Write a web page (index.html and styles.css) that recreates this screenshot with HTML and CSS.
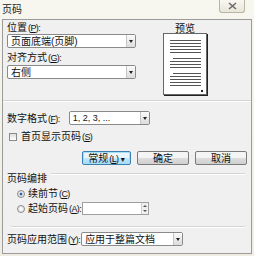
FILE: index.html
```html
<!DOCTYPE html>
<html lang="zh">
<head>
<meta charset="utf-8">
<link rel="stylesheet" href="styles.css">
</head>
<body>
<div class="window">
  <div class="titlebar">
    <span class="title">页码</span>
    <span class="close"><svg width="9" height="8" viewBox="0 0 9 8"><path d="M1 1 L8 7 M8 1 L1 7" stroke="#6b6b6b" stroke-width="1.6" fill="none"/></svg></span>
  </div>
  <div class="client">
    <div class="top">
      <div class="leftcol">
        <div class="label">位置<span class="k">(<u>P</u>):</span></div>
        <div class="select wide s1"><span>页面底端<span class="p">(</span>页脚<span class="p">)</span></span><i class="arrow"></i></div>
        <div class="label l2">对齐方式<span class="k">(<u>G</u>):</span></div>
        <div class="select wide"><span>右侧</span><i class="arrow"></i></div>
      </div>
      <div class="preview">
        <div class="plabel">预览</div>
        <div class="page">
          <div class="lines"><b></b><b></b><b></b><b></b><b></b></div>
          <div class="lines"><b class="short"></b><b></b><b></b><b></b></div>
          <div class="lines"><b class="short"></b><b></b><b></b><b></b><b></b></div>
          <i class="num"></i>
        </div>
      </div>
    </div>
    <div class="sep full"></div>
    <div class="row fmt">
      <span class="label">数字格式<span class="k">(<u>F</u>):</span></span>
      <div class="select fmtsel"><span class="lat">1, 2, 3, ...</span><i class="arrow"></i></div>
    </div>
    <div class="row chk">
      <span class="checkbox"></span><span class="label">首页显示页码<span class="k">(<u>S</u>)</span></span>
    </div>
    <div class="buttons">
      <div class="btn def">常规<span class="k">(<u>L</u>)</span> <span class="tri">▾</span></div>
      <div class="btn">确定</div>
      <div class="btn">取消</div>
    </div>
    <div class="group">
      <span class="label">页码编排</span><span class="gline"></span>
    </div>
    <div class="row radio r1"><span class="radiob on"></span><span class="label">续前节<span class="k">(<u>C</u>)</span></span></div>
    <div class="row radio r2"><span class="radiob"></span><span class="label">起始页码<span class="k">(<u>A</u>):</span></span>
      <div class="spin"><span class="spinbtn"><i class="up"></i><i class="dn"></i></span></div>
    </div>
    <div class="sep inner"></div>
    <div class="row apply">
      <span class="label">页码应用范围<span class="k">(<u>Y</u>):</span></span>
      <div class="select applysel"><span>应用于整篇文档</span><i class="arrow"></i></div>
    </div>
  </div>
</div>
</body>
</html>
```
FILE: styles.css
```css
* { box-sizing: border-box; }
html, body { margin: 0; padding: 0; }
body {
  width: 254px; height: 256px; overflow: hidden;
  font-family: "Noto Sans CJK SC", "Liberation Sans", sans-serif;
  font-size: 10px; color: #111;
  background: #f4f3ec;
}
u { text-decoration: underline; }
.k { font-family: "Liberation Sans", sans-serif; font-size: 9px; letter-spacing: -0.6px; margin-left: 1px; }
.p { font-family: "Liberation Sans", sans-serif; font-size: 10px; }
.lat { font-family: "Liberation Sans", sans-serif; font-size: 9px; }
.window {
  width: 254px; height: 256px;
  background: linear-gradient(#f7f6ef, #efede2);
  padding: 0 2px 2px 2px;
  display: flex; flex-direction: column;
}
.titlebar {
  height: 19px; display: flex; justify-content: space-between; align-items: flex-start;
}
.title { font-size: 10px; line-height: 12px; padding: 3px 0 0 0; color: #222; }
.close {
  width: 26px; height: 13px; margin-right: 7px;
  border: 1px solid #b9b6a6; border-top: none; border-radius: 0 0 3px 3px;
  background: linear-gradient(#f8f7f2, #e9e6d9);
  display: flex; align-items: center; justify-content: center;
}
.client {
  flex: 1;
  background: #f0f0f0;
  border: 1px solid #9b9b9b;
  padding: 1px 0 0 4px;
}
.top { display: flex; }
.leftcol { width: 130px; flex: none; }
.label { line-height: 12px; white-space: nowrap; }
.leftcol .label { line-height: 11px; }
.l2 { margin-top: 3px; }
.select {
  height: 14px; border: 1px solid #8a8a8a; border-radius: 2px; background: #fff;
  display: flex; align-items: center; justify-content: space-between;
  padding-left: 3px; line-height: 12px; margin-top: 1px; white-space: nowrap;
}
.select.s1 { margin-top: 0; }
.select.wide { width: 129px; }
.arrow {
  width: 9px; height: 12px; display: block; flex: none;
  background: linear-gradient(#fbfbfb, #dcdcdc);
  border-left: 1px solid #c4c4c4; position: relative;
}
.arrow::after {
  content: ""; position: absolute; left: 2px; top: 5px;
  border-left: 2.5px solid transparent; border-right: 2.5px solid transparent; border-top: 3px solid #222;
}
.preview { margin-left: 25px; width: 46px; flex: none; display: flex; flex-direction: column; align-items: center; }
.plabel { line-height: 11px; margin-top: 1px; }
.page {
  width: 44px; height: 62px; background: #fff;
  border: 1px solid #666; box-shadow: 1px 1px 0 #222;
  padding: 6px 5px 0 6px; position: relative;
}
.lines { margin-bottom: 5px; }
.lines b { display: block; height: 1px; background: #555; margin-bottom: 2px; }
.lines b.short { margin-left: 3px; }
.num { position: absolute; right: 3px; bottom: 2px; width: 2px; height: 2px; background: #222; }
.sep { height: 2px; border-top: 1px solid #d5d5d5; border-bottom: 1px solid #fff; }
.sep.full { margin: 5px 0 0 -4px; }
.row { display: flex; align-items: center; }
.fmt { margin-top: 9px; }
.fmtsel { width: 81px; margin: 0 0 0 9px; }
.chk { margin-top: 5px; }
.checkbox { width: 8px; height: 8px; border: 1px solid #8a8a8a; background: linear-gradient(#dedede, #fff); margin: 0 4px 0 2px; }
.buttons { display: flex; margin: 8px 0 0 75px; gap: 6px; }
.btn {
  width: 52px; height: 14px; border: 1px solid #7a7a7a; border-radius: 2px;
  background: linear-gradient(#f5f5f5 45%, #dcdcdc 55%, #d0d0d0);
  text-align: center; line-height: 12px; white-space: nowrap;
}
.btn.def { width: 49px; border-color: #3c7fb1; box-shadow: inset 0 0 0 1px #a6e0f8; background: linear-gradient(#eaf6fd 45%, #bee6fd 55%, #a7d9f5); }
.tri { font-family: "DejaVu Sans", sans-serif; font-size: 8px; }
.group { display: flex; align-items: flex-start; margin-top: 7px; }
.gline { flex: 1; height: 2px; border-top: 1px solid #d5d5d5; border-bottom: 1px solid #fff; margin: 1px 6px 0 4px; }
.radio { margin-left: 10px; }
.r1 { margin-top: 3px; }
.r2 { margin-top: 2px; }
.radiob {
  width: 8px; height: 8px; border-radius: 50%; border: 1px solid #8a8a8a;
  background: radial-gradient(#fff, #d8d8d8); margin-right: 3px; position: relative;
}
.radiob.on::after { content: ""; position: absolute; left: 2px; top: 2px; width: 2px; height: 2px; border-radius: 50%; background: #2a5a9a; box-shadow: 0 0 0 0.5px #4a7aba; }
.spin { width: 67px; height: 13px; border: 1px solid #a0a0a0; background: #fff; margin-left: 1px; display: flex; justify-content: flex-end; }
.spinbtn { width: 7px; display: flex; flex-direction: column; border-left: 1px solid #d0d0d0; background: #f0f0f0; }
.spinbtn i { flex: 1; position: relative; }
.spinbtn .up::after { content: ""; position: absolute; left: 1px; top: 2px; border-left: 2px solid transparent; border-right: 2px solid transparent; border-bottom: 2px solid #555; }
.spinbtn .dn::after { content: ""; position: absolute; left: 1px; top: 1px; border-left: 2px solid transparent; border-right: 2px solid transparent; border-top: 2px solid #555; }
.sep.inner { margin: 11px 6px 0 4px; }
.apply { margin-top: 4px; }
.applysel { width: 102px; margin: 0 0 0 1px; }
```
